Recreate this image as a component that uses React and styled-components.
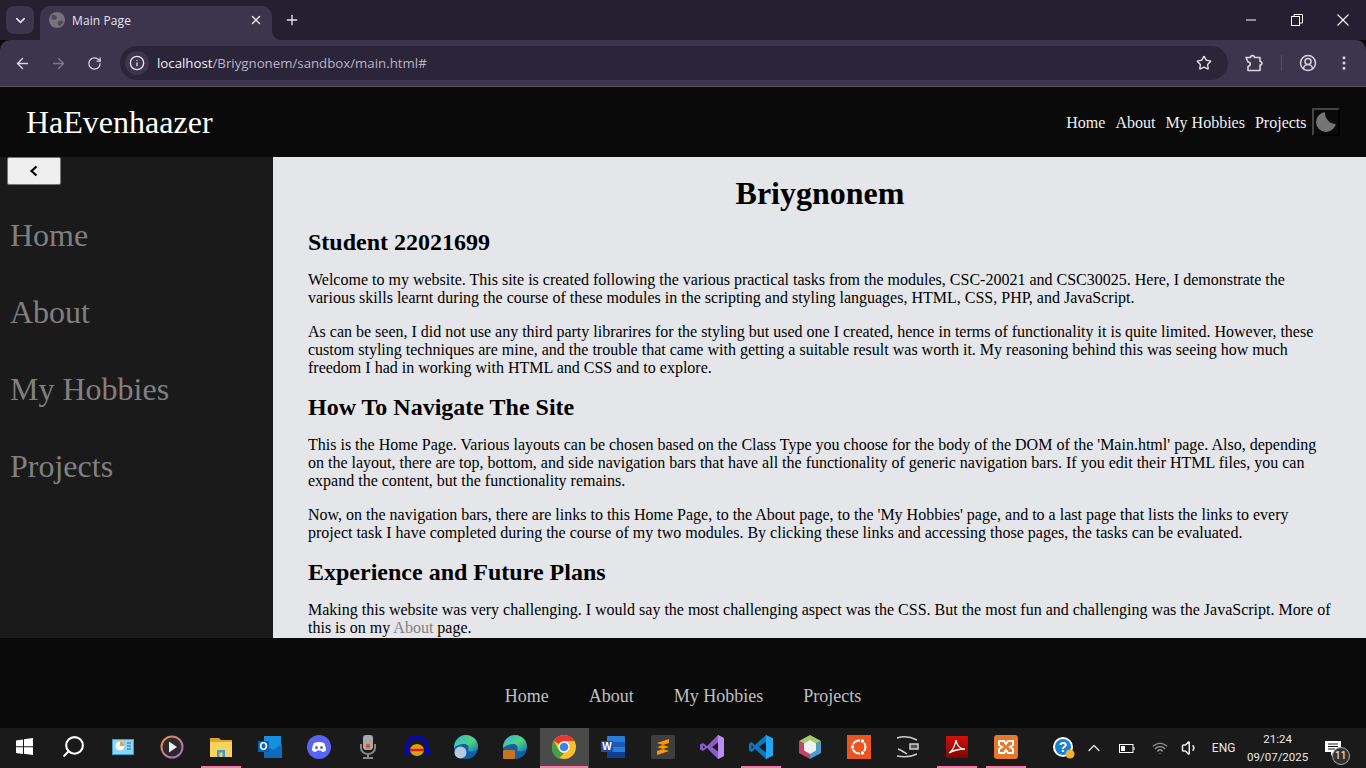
import styled, { createGlobalStyle } from "styled-components";
import { ArrowLeft, ArrowRight, RotateCw, Info, Star, CircleUserRound, EllipsisVertical, X, Plus, ChevronDown, ChevronUp, Search, Wifi, Volume1 } from "lucide-react";

const GlobalStyle = createGlobalStyle`
    html, body {
        margin: 0;
        padding: 0;
        height: 768px;
        overflow: hidden;
        background: #0a0a0a;
    }
    * { box-sizing: border-box; }
`;

const Page = styled.div`
    width: 1366px;
    height: 768px;
    display: flex;
    flex-direction: column;
    overflow: hidden;
    font-family: "Liberation Serif", "Times New Roman", serif;
`;

/* browser chrome */
const TabStrip = styled.div`
    height: 40px;
    background: #241f31;
    display: flex;
    align-items: flex-end;
    padding-left: 6px;
    color: #e6e3ec;
    font-family: "Open Sans", "Noto Sans", sans-serif;
`;

const TabMenu = styled.div`
    width: 28px;
    height: 28px;
    margin-bottom: 6px;
    margin-right: 6px;
    border-radius: 8px;
    background: #3d354d;
    display: flex;
    align-items: center;
    justify-content: center;
`;

const Tab = styled.div`
    position: relative;
    width: 232px;
    height: 34px;
    background: #3d354d;
    border-radius: 10px 10px 0 0;
    display: flex;
    align-items: center;
    padding: 0 9px 6px 9px;
    font-size: 12px;

    &::after {
        content: "";
        position: absolute;
        right: -10px;
        bottom: 0;
        width: 10px;
        height: 10px;
        background: radial-gradient(circle at 100% 0, #241f31 10px, #3d354d 10.5px);
    }
`;

const TabTitle = styled.span`
    flex: 1;
    margin-left: 7px;
    letter-spacing: 0.1px;
`;

const NewTab = styled.div`
    width: 40px;
    height: 40px;
    display: flex;
    align-items: center;
    justify-content: center;
`;

const WindowControls = styled.div`
    margin-left: auto;
    height: 40px;
    display: flex;
`;

const WindowButton = styled.div`
    width: 46px;
    height: 40px;
    display: flex;
    align-items: center;
    justify-content: center;
`;

const Toolbar = styled.div`
    height: 47px;
    background: #3d354d;
    border-radius: 10px 10px 0 0;
    border-bottom: 1px solid #57505f;
    display: flex;
    align-items: flex-start;
    padding: 6px 0 0 4px;
    color: #d9d5e0;
`;

const ToolButton = styled.div`
    width: 36px;
    height: 34px;
    display: flex;
    align-items: center;
    justify-content: center;
    color: ${(p) => (p.$dim ? "#7d7789" : "#d9d5e0")};
`;

const Omnibox = styled.div`
    width: 1108px;
    height: 34px;
    margin: 0 8px;
    border-radius: 17px;
    background: #2b2539;
    display: flex;
    align-items: center;
    padding: 0 16px 0 5px;
`;

const InfoChip = styled.div`
    width: 24px;
    height: 24px;
    border-radius: 50%;
    background: #3d354d;
    display: flex;
    align-items: center;
    justify-content: center;
    margin-right: 8px;
`;

const Url = styled.span`
    flex: 1;
    font-family: "Open Sans", "Noto Sans", sans-serif;
    font-size: 13.25px;
    color: #b9b4c3;

    b {
        font-weight: 400;
        color: #f2f0f5;
    }
`;

const ToolDivider = styled.div`
    width: 1px;
    height: 16px;
    margin: 9px 8px 0 9px;
    background: #57505f;
`;

/* site */
const SiteHeader = styled.header`
    height: 70px;
    background: #0a0a0a;
    display: flex;
    align-items: center;
    padding: 0 26px;
`;

const Logo = styled.div`
    flex: 1;
    font-size: 32px;
    color: #fff;
`;

const HeaderNav = styled.nav`
    display: flex;
    align-items: center;
    gap: 10px;
`;

const HeaderLink = styled.a`
    font-size: 16px;
    padding-top: 2px;
    color: #f0f0f0;
`;

const ThemeButton = styled.div`
    width: 28px;
    height: 28px;
    margin-left: -4.5px;
    border: 2px solid;
    border-color: #444 #000 #000 #444;
    background: #0a0a0a;
    display: flex;
    align-items: center;
    justify-content: center;
`;

const Middle = styled.div`
    height: 481px;
    display: flex;
`;

const Sidebar = styled.aside`
    width: 273px;
    background: #1a1a1a;
    display: flex;
    flex-direction: column;
`;

const CollapseButton = styled.div`
    width: 54px;
    height: 28px;
    margin-left: 7px;
    background: #efeff0;
    border: 1px solid #767676;
    border-radius: 2px;
    display: flex;
    align-items: center;
    justify-content: center;
    color: #000;
`;

const SideLinks = styled.div`
    display: flex;
    flex-direction: column;
    gap: 40px;
    padding: 32px 0 0 10px;
`;

const SideLink = styled.a`
    font-size: 32px;
    line-height: 37px;
    color: #808080;
`;

const Content = styled.main`
    flex: 1;
    background: #e5e6ea;
    padding: 0 35px;
    color: #000;
    overflow: hidden;
    font-size: 16px;

    h1 {
        font-size: 32px;
        line-height: 37px;
        text-align: center;
        margin: 18px 0 0;
        padding-left: 1px;
    }

    h2 {
        font-size: 24px;
        line-height: 27px;
        margin: 17px 0 0;
    }

    p {
        line-height: 18px;
        margin: 16px 0 0;
    }

    h2 + p {
        margin-top: 15px;
    }

    a {
        color: #808080;
    }
`;

const SiteFooter = styled.footer`
    height: 90px;
    background: #0a0a0a;
    display: flex;
    justify-content: center;
    align-items: flex-end;
    gap: 40px;
    padding: 0 0 22px 0;
`;

const FooterLink = styled.a`
    font-size: 18px;
    line-height: 20px;
    color: #c0c0c0;
`;

/* taskbar */
const Taskbar = styled.div`
    height: 40px;
    background: #1a1a1a;
    display: flex;
    align-items: stretch;
    color: #fff;
    font-family: "Roboto", "Open Sans", sans-serif;
`;

const TaskItem = styled.div`
    position: relative;
    width: 49.09px;
    display: flex;
    align-items: center;
    justify-content: center;
    padding-bottom: 3px;
    background: ${(p) => (p.$active ? "#4a4a4a" : "transparent")};

    &::after {
        content: "";
        display: ${(p) => (p.$running ? "block" : "none")};
        position: absolute;
        left: ${(p) => (p.$active ? 0 : 4.5)}px;
        right: ${(p) => (p.$active ? 1 : 4.5)}px;
        bottom: 0;
        height: 2px;
        background: #f27aa6;
    }
`;

const SearchGlyph = styled(Search)`
    transform: scaleX(-1);
`;

const Tray = styled.div`
    flex: 1;
    display: flex;
    align-items: center;
    padding-left: 18px;
`;

const TrayItem = styled.div`
    width: ${(p) => p.$w}px;
    height: 40px;
    display: flex;
    align-items: center;
    justify-content: center;
    font-size: 12px;
    color: #e8e8e8;
`;

const Clock = styled.div`
    width: 70px;
    text-align: center;
    font-size: 11.5px;
    line-height: 18px;
    color: #e8e8e8;
`;

const Notifications = styled.div`
    position: relative;
    width: 40px;
    height: 40px;
    display: flex;
    align-items: center;
    justify-content: center;
`;

const NotifyBadge = styled.span`
    position: absolute;
    left: 19px;
    top: 19px;
    width: 18px;
    height: 18px;
    border-radius: 50%;
    border: 1px solid #aaa;
    background: #333;
    color: #fff;
    font-size: 10px;
    line-height: 16px;
    text-align: center;
`;

function Globe() {
    return (
        <svg width="16" height="16" viewBox="0 0 16 16">
            <circle cx="8" cy="8" r="8" fill="#74757a" />
            <path d="M3 2.500l4 1 1 2.500-2 2-3.500-1zM9 9.500l4-1 1.500 1.500-3.500 4-2-1z" fill="#4c4858" />
        </svg>
    );
}

function MinimizeLine() {
    return (
        <svg width="10" height="2" viewBox="0 0 10 2">
            <path d="M0 1h10" stroke="#fff" />
        </svg>
    );
}

function Restore() {
    return (
        <svg width="12" height="12" viewBox="0 0 12 12" fill="none" stroke="#fff">
            <rect x="0.5" y="2.500" width="8" height="9" />
            <path d="M3 2.500V.5h8.500V9H8.500" />
        </svg>
    );
}

function CloseCross() {
    return (
        <svg width="12" height="12" viewBox="0 0 12 12" fill="none" stroke="#fff" strokeWidth="1.100">
            <path d="M.5.5l11 11M11.500.5l-11 11" />
        </svg>
    );
}

function Puzzle() {
    return (
        <svg width="18" height="18" viewBox="0 0 18 18" fill="none" stroke="#d9d5e0" strokeWidth="1.600">
            <path d="M1 3.500h4.500C5.500 1 9.500 1 9.500 3.500H15v4c2.500 0 2.500 3.500 0 3.500v5.500H3v-4C6 12 6 8 3 8z" strokeLinejoin="round" />
        </svg>
    );
}

function Moon() {
    return (
        <svg width="20" height="20" viewBox="0 0 20 20">
            <circle cx="10" cy="10" r="10" fill="#757575" />
            <circle cx="20" cy="1" r="11" fill="#0a0a0a" />
        </svg>
    );
}

function Windows() {
    return (
        <svg width="17" height="17" viewBox="0 0 17 17" fill="#fff">
            <path d="M0 2.400l7-1v6.800H0zM8 1.300L17 0v8.200H8zM0 9.200h7V16l-7-1zM8 9.200h9V17l-9-1.300z" />
        </svg>
    );
}

function TaskManager() {
    return (
        <svg width="22" height="16" viewBox="0 0 22 16">
            <rect width="22" height="16" fill="#3aa0d8" />
            <rect x="1" y="1" width="20" height="14" fill="#8ed4f2" />
            <circle cx="8" cy="7" r="4.500" fill="#f7f7f7" />
            <path d="M8 7V2.500A4.500 4.500 0 0 1 12.500 7z" fill="#f0a030" />
            <path d="M15 4h4M15 7h4M15 10h4" stroke="#1d6d9e" />
        </svg>
    );
}

function MediaPlayer() {
    return (
        <svg width="24" height="24" viewBox="0 0 24 24">
            <defs>
                <linearGradient id="mp" x1="0" y1="0" x2="1" y2="1">
                    <stop offset="0" stopColor="#ee8a45" />
                    <stop offset="1" stopColor="#a768d8" />
                </linearGradient>
            </defs>
            <circle cx="12" cy="12" r="10.500" fill="#2a2a2a" stroke="url(#mp)" strokeWidth="2" />
            <path d="M9 6.500l8 5.500-8 5.500z" fill="#eee" />
        </svg>
    );
}

function Folder() {
    return (
        <svg width="22" height="20" viewBox="0 0 22 20">
            <path d="M0 1h9l2 2h11v17H0z" fill="#e0a526" />
            <rect y="5" width="22" height="15" fill="#f9d35e" />
            <rect x="7" y="13" width="8" height="7" fill="#3c9bd8" />
            <rect x="9.500" y="15.500" width="3" height="4.500" fill="#f9d35e" />
        </svg>
    );
}

function Outlook() {
    return (
        <svg width="24" height="22" viewBox="0 0 24 22">
            <rect x="6" y="0" width="17" height="15" fill="#1490df" />
            <path d="M6 8l9 6 9-6v14H6z" fill="#0f6cbd" />
            <rect y="5" width="11" height="11" fill="#0a5fb0" />
            <text x="5.500" y="14" fontFamily="Liberation Sans" fontWeight="700" fontSize="10" fill="#fff" textAnchor="middle">O</text>
        </svg>
    );
}

function Discord() {
    return (
        <svg width="24" height="24" viewBox="0 0 24 24">
            <circle cx="12" cy="12" r="12" fill="#5865f2" />
            <path d="M7 8c3-1.500 7-1.500 10 0 1.500 2.500 2 5 2 7.500-1.500 1-3 1.500-4 1.500l-.8-1.500h-4.400L9 17c-1 0-2.500-.5-4-1.500C5 13 5.500 10.500 7 8z" fill="#fff" />
            <circle cx="9.500" cy="12.500" r="1.500" fill="#5865f2" />
            <circle cx="14.500" cy="12.500" r="1.500" fill="#5865f2" />
        </svg>
    );
}

function Recorder() {
    return (
        <svg width="16" height="24" viewBox="0 0 16 24">
            <rect x="3" y="0" width="10" height="15" rx="3" fill="#a8a8a8" />
            <circle cx="8" cy="11" r="2.200" fill="#e0501e" />
            <path d="M1 9v4a7 6 0 0 0 14 0V9" fill="none" stroke="#888" strokeWidth="2" />
            <path d="M8 19v3M3 23h10" stroke="#888" strokeWidth="2" />
        </svg>
    );
}

function Audacity() {
    return (
        <svg width="24" height="22" viewBox="0 0 24 22">
            <path d="M2 16V11a10 10 0 0 1 20 0v5" fill="none" stroke="#0000e0" strokeWidth="2.500" />
            <rect x="0" y="12" width="4" height="7" rx="2" fill="#0000e0" />
            <rect x="20" y="12" width="4" height="7" rx="2" fill="#0000e0" />
            <ellipse cx="12" cy="14" rx="7" ry="6" fill="#d9a018" />
            <path d="M5 14h14" stroke="#d81e10" strokeWidth="2.500" />
        </svg>
    );
}

function Edge({ work }) {
    const id = work ? "eb" : "ea";
    return (
        <svg width="24" height="24" viewBox="0 0 24 24">
            <defs>
                <linearGradient id={id} x1="0" y1="0" x2="1" y2="1">
                    <stop offset="0" stopColor="#2fb5d8" />
                    <stop offset="0.55" stopColor="#52d67c" />
                    <stop offset="1" stopColor="#1572c4" />
                </linearGradient>
            </defs>
            <circle cx="12" cy="12" r="12" fill="#0f5fb0" />
            <path d="M12 0a12 12 0 0 1 12 12c0 3-3 4.500-7 4.500-3 0-3-1.500-2.500-3 .5-2-1-4.500-4-4.500C6 9 1.500 11 0 13 0 6 5 0 12 0z" fill={`url(#${id})`} />
            {work
                ? <rect x="0" y="15" width="12" height="9" rx="1" fill="#c8741c" />
                : <circle cx="6.500" cy="17.500" r="6" fill="#b7c9de" />}
        </svg>
    );
}

function Chrome() {
    return (
        <svg width="24" height="24" viewBox="0 0 24 24">
            <circle cx="12" cy="12" r="12" fill="#fbc02d" />
            <path d="M12 0a12 12 0 0 1 10.400 6H12a6 6 0 0 0-5.200 3L1.600 6A12 12 0 0 1 12 0z" fill="#e53935" />
            <path d="M1.600 6l5.200 9a6 6 0 0 0 5.200 3l-5.200 5.700A12 12 0 0 1 1.600 6z" fill="#43a047" />
            <circle cx="12" cy="12" r="5.500" fill="#fff" />
            <circle cx="12" cy="12" r="4.300" fill="#3f7fe8" />
        </svg>
    );
}

function Word() {
    return (
        <svg width="24" height="22" viewBox="0 0 24 22">
            <rect x="6" y="0" width="18" height="22" rx="1" fill="#2b7cd3" />
            <rect x="6" y="6" width="18" height="5" fill="#185abd" />
            <rect x="6" y="16" width="18" height="6" fill="#103f91" />
            <rect y="5" width="12" height="11" fill="#1a4fb0" />
            <text x="6" y="14" fontFamily="Liberation Sans" fontWeight="700" fontSize="10" fill="#fff" textAnchor="middle">W</text>
        </svg>
    );
}

function Sublime() {
    return (
        <svg width="24" height="24" viewBox="0 0 24 24">
            <rect width="24" height="24" rx="2" fill="#3e3e3e" />
            <path d="M18 4L6 8v4l12-4zM6 8l12 4v4L6 12zM18 12L6 16v4l12-4z" fill="#ff9800" />
        </svg>
    );
}

function VisualStudio() {
    return (
        <svg width="24" height="24" viewBox="0 0 24 24">
            <path d="M18 0l6 3v18l-6 3L7 13l-4 3-3-1.500v-5L3 8l4 3z" fill="#8a5cc8" />
            <path d="M18 0l6 3v18l-6 3z" fill="#b98eee" />
            <path d="M18 7.500v9L12 12z" fill="#1a1a1a" />
            <path d="M3 10.500v3L5 12z" fill="#1a1a1a" />
        </svg>
    );
}

function VsCode() {
    return (
        <svg width="24" height="24" viewBox="0 0 24 24">
            <path d="M17 0l7 3.500v17L17 24 6 14l-3.500 3L0 15.500v-7L2.500 7 6 10z" fill="#0a78c2" />
            <path d="M17 0l7 3.500v17L17 24z" fill="#23a6f0" />
            <path d="M17 6.500v11L10 12z" fill="#1a1a1a" />
            <path d="M2.500 10v4l2-2z" fill="#1a1a1a" />
        </svg>
    );
}

function NetBeans() {
    return (
        <svg width="22" height="24" viewBox="0 0 22 24">
            <path d="M11 0l11 6-11 6L0 6z" fill="#a7c96a" />
            <path d="M0 6l11 6v12L0 18z" fill="#c2436a" />
            <path d="M22 6L11 12v12l11-6z" fill="#4f9bcb" />
            <path d="M11 5l6 3.500v7L11 19l-6-3.500v-7z" fill="#f0f0ea" />
        </svg>
    );
}

function Ubuntu() {
    return (
        <svg width="24" height="24" viewBox="0 0 24 24">
            <rect width="24" height="24" fill="#e95420" />
            <circle cx="12" cy="12" r="6.500" fill="none" stroke="#fff" strokeWidth="2" />
            <circle cx="15.500" cy="6" r="2.200" fill="#fff" stroke="#e95420" />
            <circle cx="15.500" cy="18" r="2.200" fill="#fff" stroke="#e95420" />
            <circle cx="5.500" cy="12" r="2.200" fill="#fff" stroke="#e95420" />
        </svg>
    );
}

function Tunnel() {
    return (
        <svg width="24" height="24" viewBox="0 0 24 24" fill="none" stroke="#cfcfcf" strokeWidth="1.500">
            <path d="M1 3c6-2 14-1 20 2" />
            <path d="M1 21c6 1 14 1 20-2" />
            <path d="M14 9h8v5h-8z" fill="#555" />
            <path d="M2 14c3 1 6 3 9 5" />
        </svg>
    );
}

function Acrobat() {
    return (
        <svg width="22" height="22" viewBox="0 0 22 22">
            <defs>
                <linearGradient id="acro" x1="0" y1="0" x2="0" y2="1">
                    <stop offset="0" stopColor="#d3120a" />
                    <stop offset="1" stopColor="#7c0600" />
                </linearGradient>
            </defs>
            <rect width="22" height="22" rx="1" fill="url(#acro)" />
            <path d="M3 17c3-2 6-7 7-13 1 6 4 9 9 9-5 0-11 1-16 4z" fill="none" stroke="#fff" strokeWidth="1.300" />
        </svg>
    );
}

function Xampp() {
    return (
        <svg width="24" height="24" viewBox="0 0 24 24">
            <rect width="24" height="24" rx="3" fill="#e9772b" />
            <path d="M5 6h5l2 3 2-3h5v4l-3 2 3 2v4h-5l-2-3-2 3H5v-4l3-2-3-2z" fill="none" stroke="#fff" strokeWidth="2" />
        </svg>
    );
}

function HelpBadge() {
    return (
        <svg width="24" height="24" viewBox="0 0 24 24">
            <circle cx="11" cy="11" r="10" fill="#fff" />
            <circle cx="11" cy="11" r="8" fill="#1682d4" />
            <text x="11" y="16" fontFamily="Liberation Sans" fontWeight="700" fontSize="14" fill="#fff" textAnchor="middle">?</text>
            <circle cx="18" cy="18" r="4.500" fill="#f2b233" />
        </svg>
    );
}

function Battery() {
    return (
        <svg width="16" height="9" viewBox="0 0 16 9" fill="none" stroke="#fff">
            <rect x=".5" y=".5" width="13.500" height="8" />
            <rect x="2" y="2" width="4" height="5" fill="#fff" stroke="none" />
            <path d="M15 3v3" />
        </svg>
    );
}

function Message() {
    return (
        <svg width="16" height="15" viewBox="0 0 16 15">
            <path d="M0 0h16v11H9l-3 4v-4H0z" fill="#fff" />
            <path d="M3 3h10M3 5.500h10M3 8h7" stroke="#1a1a1a" />
        </svg>
    );
}

const taskIcons = [
    { key: "start", icon: <Windows /> },
    { key: "search", icon: <SearchGlyph size={25} strokeWidth={2} color="#fff" /> },
    { key: "tasks", icon: <TaskManager /> },
    { key: "media", icon: <MediaPlayer /> },
    { key: "files", icon: <Folder />, running: true },
    { key: "outlook", icon: <Outlook /> },
    { key: "discord", icon: <Discord /> },
    { key: "recorder", icon: <Recorder /> },
    { key: "audacity", icon: <Audacity /> },
    { key: "edge", icon: <Edge /> },
    { key: "edgework", icon: <Edge work /> },
    { key: "chrome", icon: <Chrome />, running: true, active: true },
    { key: "word", icon: <Word /> },
    { key: "sublime", icon: <Sublime /> },
    { key: "vs", icon: <VisualStudio /> },
    { key: "vscode", icon: <VsCode />, running: true },
    { key: "netbeans", icon: <NetBeans /> },
    { key: "ubuntu", icon: <Ubuntu /> },
    { key: "tunnel", icon: <Tunnel /> },
    { key: "acrobat", icon: <Acrobat />, running: true },
    { key: "xampp", icon: <Xampp />, running: true },
];

const links = ["Home", "About", "My Hobbies", "Projects"];

export default function App() {
    return (
        <Page>
            <GlobalStyle />
            <TabStrip>
                <TabMenu><ChevronDown size={15} strokeWidth={2.5} /></TabMenu>
                <Tab>
                    <Globe />
                    <TabTitle>Main Page</TabTitle>
                    <X size={14} strokeWidth={2.5} />
                </Tab>
                <NewTab><Plus size={16} strokeWidth={2} /></NewTab>
                <WindowControls>
                    <WindowButton><MinimizeLine /></WindowButton>
                    <WindowButton><Restore /></WindowButton>
                    <WindowButton><CloseCross /></WindowButton>
                </WindowControls>
            </TabStrip>
            <Toolbar>
                <ToolButton><ArrowLeft size={17} /></ToolButton>
                <ToolButton $dim><ArrowRight size={17} /></ToolButton>
                <ToolButton><RotateCw size={15} /></ToolButton>
                <Omnibox>
                    <InfoChip><Info size={16} color="#e6e3ec" /></InfoChip>
                    <Url><b>localhost</b>/Briygnonem/sandbox/main.html#</Url>
                    <Star size={16} color="#e6e3ec" strokeWidth={2} />
                </Omnibox>
                <ToolButton><Puzzle /></ToolButton>
                <ToolDivider />
                <ToolButton><CircleUserRound size={18} /></ToolButton>
                <ToolButton><EllipsisVertical size={18} /></ToolButton>
            </Toolbar>

            <SiteHeader>
                <Logo>HaEvenhaazer</Logo>
                <HeaderNav>
                    {links.map((l) => <HeaderLink key={l}>{l}</HeaderLink>)}
                    <ThemeButton><Moon /></ThemeButton>
                </HeaderNav>
            </SiteHeader>

            <Middle>
                <Sidebar>
                    <CollapseButton>
                        <svg width="10" height="12" viewBox="0 0 10 12" fill="none" stroke="#000" strokeWidth="2.200"><path d="M7.500 1.500L2.500 6l5 4.500" /></svg>
                    </CollapseButton>
                    <SideLinks>
                        {links.map((l) => <SideLink key={l}>{l}</SideLink>)}
                    </SideLinks>
                </Sidebar>
                <Content>
                    <h1>Briygnonem</h1>
                    <h2>Student 22021699</h2>
                    <p>Welcome to my website. This site is created following the various practical tasks from the modules, CSC-20021 and CSC30025. Here, I demonstrate the various skills learnt during the course of these modules in the scripting and styling languages, HTML, CSS, PHP, and JavaScript.</p>
                    <p>As can be seen, I did not use any third party librarires for the styling but used one I created, hence in terms of functionality it is quite limited. However, these custom styling techniques are mine, and the trouble that came with getting a suitable result was worth it. My reasoning behind this was seeing how much freedom I had in working with HTML and CSS and to explore.</p>
                    <h2>How To Navigate The Site</h2>
                    <p>This is the Home Page. Various layouts can be chosen based on the Class Type you choose for the body of the DOM of the 'Main.html' page. Also, depending on the layout, there are top, bottom, and side navigation bars that have all the functionality of generic navigation bars. If you edit their HTML files, you can expand the content, but the functionality remains.</p>
                    <p>Now, on the navigation bars, there are links to this Home Page, to the About page, to the 'My Hobbies' page, and to a last page that lists the links to every project task I have completed during the course of my two modules. By clicking these links and accessing those pages, the tasks can be evaluated.</p>
                    <h2>Experience and Future Plans</h2>
                    <p>Making this website was very challenging. I would say the most challenging aspect was the CSS. But the most fun and challenging was the JavaScript. More of this is on my <a>About</a> page.</p>
                </Content>
            </Middle>

            <SiteFooter>
                {links.map((l) => <FooterLink key={l}>{l}</FooterLink>)}
            </SiteFooter>

            <Taskbar>
                {taskIcons.map((t) => (
                    <TaskItem key={t.key} $running={t.running} $active={t.active}>{t.icon}</TaskItem>
                ))}
                <Tray>
                    <TrayItem $w={30}><HelpBadge /></TrayItem>
                    <TrayItem $w={30}><ChevronUp size={20} strokeWidth={1.5} /></TrayItem>
                    <TrayItem $w={36}><Battery /></TrayItem>
                    <TrayItem $w={30}><Wifi size={16} color="#999" /></TrayItem>
                    <TrayItem $w={30}><Volume1 size={18} /></TrayItem>
                    <TrayItem $w={38}>ENG</TrayItem>
                    <Clock>21:24<br />09/07/2025</Clock>
                    <Notifications>
                        <Message />
                        <NotifyBadge>11</NotifyBadge>
                    </Notifications>
                </Tray>
            </Taskbar>
        </Page>
    );
}
